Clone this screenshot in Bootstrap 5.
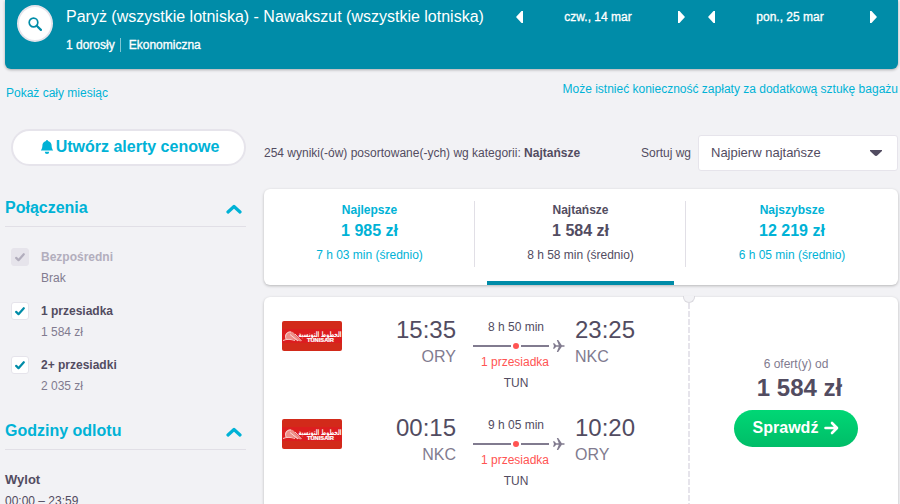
<!DOCTYPE html>
<html lang="pl">
<head>
  <meta charset="UTF-8" />
  <title>Paryż - Nawakszut</title>
  <meta name="viewport" content="width=device-width, initial-scale=1" />
  <!-- Bootstrap CSS -->
  <link href="https://cdn.jsdelivr.net/npm/bootstrap@5.3.0/dist/css/bootstrap.min.css" rel="stylesheet" />
  <style>
    body {
      background: #f2f2f5;
      color: #524c61;
      font-family: "Liberation Sans", Arial, sans-serif;
      font-size: 12px;
      line-height: 18px;
      overflow: hidden;
    }
    svg {
      display: block;
      flex: none;
    }
    a, .teal {
      color: #00b2d6;
      text-decoration: none;
    }
    .page {
      width: 893px;
      margin-left: 5px;
      height: 504px;
    }

    /* Search summary */
    .search-bar {
      height: 69px;
      background: #008ca8;
      color: #fff;
      border-radius: 0 0 6px 6px;
      box-shadow: 0 1px 3px rgba(0,0,0,0.3);
      padding: 5px 0 0 12px;
    }
    .search-btn {
      width: 36px;
      height: 37px;
      border: 2px solid #e6e4eb;
      border-radius: 50%;
      background: #fff;
      margin-right: 13px;
    }
    .search-info {
      width: 450px;
    }
    .route {
      font-size: 16px;
      line-height: 24px;
      font-weight: 400;
    }
    .route-details {
      margin-top: 7px;
      -webkit-text-stroke: 0.3px #fff;
    }
    .route-details .pax {
      border-right: 1px solid #80c6d4;
      padding-right: 5px;
      margin-right: 8px;
      line-height: 14px;
    }
    .day-nav {
      width: 169px;
      height: 24px;
      margin-right: 23px;
      -webkit-text-stroke: 0.3px #fff;
    }
    .day-nav span {
      padding-right: 5px;
    }

    .links-row {
      height: 60px;
      padding-top: 11px;
    }
    .month-link {
      padding: 4px 0 0 1px;
    }

    /* Sidebar */
    .filters {
      width: 241px;
      margin-right: 18px;
    }
    .alert-btn {
      height: 37px;
      margin-left: 6px;
      border: 2px solid #e6e4eb;
      border-radius: 19px;
      background: #fff;
      font-size: 16px;
      font-weight: 700;
      padding: 0 0 2px 2px;
    }
    .alert-btn span {
      margin-left: 2px;
    }
    .filter-title {
      font-size: 16px;
      line-height: 24px;
      font-weight: 700;
      height: 31px;
      border-bottom: 1px solid #e1dfe6;
      margin: 0;
    }
    .filter-title.first {
      margin-top: 30px;
    }
    .filter-title svg {
      margin: 8px 4px 0 0;
    }
    .filter-list {
      padding: 21px 0 0 6px;
      height: 192px;
    }
    .filter-item {
      height: 54px;
    }
    .tick {
      width: 18px;
      height: 18px;
      border: 1px solid #e6e4eb;
      border-radius: 3px;
      background: #fff;
      margin: 0 12px 0 0;
    }
    .tick.off {
      background: #e6e4eb;
    }
    .soft {
      color: #817b8f;
    }
    .off-text {
      color: #b2aebd;
    }
    .filter-item .soft {
      margin-top: 3px;
    }
    .departure-hours {
      padding-top: 21px;
    }
    .hours-label {
      font-size: 13px;
    }
    .hours-range {
      margin-top: 3px;
    }

    /* Results */
    .results {
      width: 634px;
    }
    .sort-row {
      height: 36px;
      margin: 6px 0 18px;
    }
    .sort-select {
      width: 200px;
      height: 36px;
      border: 1px solid #e6e4eb;
      border-radius: 3px;
      background: #fff;
      font-size: 13px;
      padding: 0 15px 0 12px;
      margin-left: 7px;
    }
    .panel {
      background: #fff;
      border-radius: 6px;
      box-shadow: 0 1px 3px rgba(0,0,0,0.25);
    }
    .sort-tabs {
      height: 96px;
    }
    .sort-tab {
      width: 211px;
      padding-top: 12px;
    }
    .sort-tab .inner {
      height: 66px;
      border-right: 1px solid #e1dfe6;
      padding-left: 1px;
    }
    .sort-tab:last-child .inner {
      border-right: 0;
    }
    .sort-tab .price {
      font-size: 16px;
      line-height: 24px;
      font-weight: 700;
    }
    .sort-tab .avg {
      margin-top: 3px;
    }
    .sort-tab .underline {
      height: 4px;
      margin: 14px 12px 0;
      background: #008ca8;
    }
    .ticket {
      height: 230px;
      margin-top: 12px;
      position: relative;
    }
    .legs {
      width: 426px;
      padding: 18px 0 0 18px;
      background: repeating-linear-gradient(#e6e4eb 0 6px, transparent 6px 8px) right 0 top 6px / 2px 100% no-repeat;
    }
    .leg {
      height: 98px;
    }
    .airline {
      margin-top: 6px;
    }
    .clock {
      font-size: 24px;
      line-height: 30px;
    }
    .place {
      font-size: 16px;
      line-height: 24px;
    }
    .depart {
      width: 114px;
    }
    .stops {
      width: 86px;
      margin: 3px 0 0 17px;
    }
    .stops svg {
      width: 94px;
      margin: 4px 0 1px;
    }
    .stop-code {
      margin-top: 3px;
    }
    .coral {
      color: #ff5452;
      margin-right: 2px;
    }
    .arrive {
      margin-left: 16px;
    }
    .notch {
      position: absolute;
      left: 419px;
      top: -1px;
      width: 12px;
      height: 7px;
      background: #f2f2f5;
      border: 1px solid #dad9de;
      border-top: 0;
      border-radius: 0 0 6px 6px;
    }
    .offer {
      width: 208px;
      padding: 58px 0 0 4px;
    }
    .offer .total {
      font-size: 24px;
      line-height: 30px;
      font-weight: 700;
      padding-left: 7px;
    }
    .check-btn {
      width: 124px;
      height: 37px;
      border-radius: 19px;
      background: linear-gradient(#00d775, #00bd68);
      color: #fff;
      font-size: 16px;
      font-weight: 700;
      margin-top: 7px;
      padding-bottom: 2px;
    }
    .check-btn svg {
      margin-left: 6px;
    }
  </style>
</head>
<body>
  <!-- Shared icons -->
  <svg width="0" height="0" class="d-none">
    <symbol id="tri-left" viewBox="0 0 7 12"><path d="M7 0v12H5.500L0 6l5.500-6z" fill="#fff"/></symbol>
    <symbol id="tri-right" viewBox="0 0 7 12"><path d="M0 0v12h1.500L7 6 1.500 0z" fill="#fff"/></symbol>
    <symbol id="chevron" viewBox="0 0 16 10"><path d="M2 8l6-5.500L14 8" fill="none" stroke="#00b2d6" stroke-width="3.200" stroke-linecap="round" stroke-linejoin="round"/></symbol>
    <symbol id="check" viewBox="0 0 10 9"><path d="M1.200 4.900l2.300 2.300L8.800 1.200" fill="none" stroke="currentColor" stroke-width="2.200" stroke-linecap="round" stroke-linejoin="round"/></symbol>
    <symbol id="flight-line" viewBox="0 0 94 12">
      <path d="M0 6h38M48 6h28" stroke="#817b8f" stroke-width="2"/>
      <circle cx="43" cy="6" r="3" fill="#ff5452"/>
      <path d="M80 3.200h1.300L83.200 5.300h2.600L83.800 0h1.400l3.600 5.300H91a.7.7 0 0 1 0 1.400h-2.200L85.200 12h-1.400l2-5.300h-2.600l-1.900 2.100H80L81 6z" fill="#817b8f"/>
    </symbol>
    <symbol id="tunisair" viewBox="0 0 60 30">
      <rect width="60" height="30" rx="2" fill="#d22a1a"/>
      <rect y="8" width="60" height="14" fill="#dc1d1f"/>
      <path d="M4 18c-2-4 0-7 4-7.500 3 0 5 2 5.500 4l6 6c-4 0-7-2.500-10-2.500z" fill="#ee8f8a"/>
      <path d="M4 18c-1.500-4 1-7.500 5-7M1 19.500c4-1.800 8-1.200 12 0M13 13l6.500 7M8 13.500l8 6.500" fill="none" stroke="#fbdedc" stroke-width=".9"/>
      <text x="38" y="15.800" text-anchor="middle" textLength="43" lengthAdjust="spacingAndGlyphs" font-family="DejaVu Sans, sans-serif" font-size="7.500" font-weight="700" fill="#fff">الخطوط التونسية</text>
      <text x="25" y="21.200" textLength="27" lengthAdjust="spacingAndGlyphs" font-family="Liberation Sans, sans-serif" font-size="5" font-weight="700" fill="#fff" stroke="#fff" stroke-width=".2">TUNISAIR</text>
    </symbol>
  </svg>

  <div class="page">
    <header class="search-bar d-flex align-items-start">
      <div class="search-btn d-flex align-items-center justify-content-center">
        <svg width="14" height="14" viewBox="0 0 14 14"><circle cx="5.500" cy="5.500" r="4.300" fill="none" stroke="#008ca8" stroke-width="1.700"/><path d="M8.700 8.700l4.200 4.200" stroke="#008ca8" stroke-width="2.200" stroke-linecap="round"/></svg>
      </div>
      <div class="search-info">
        <h1 class="route mb-0 text-nowrap">Paryż (wszystkie lotniska) - Nawakszut (wszystkie lotniska)</h1>
        <div class="route-details d-flex align-items-center"><span class="pax">1 dorosły</span><span>Ekonomiczna</span></div>
      </div>
      <div class="day-nav d-flex align-items-center justify-content-between">
        <svg width="7" height="12"><use href="#tri-left"/></svg>
        <span>czw., 14 mar</span>
        <svg width="7" height="12"><use href="#tri-right"/></svg>
      </div>
      <div class="day-nav d-flex align-items-center justify-content-between me-0">
        <svg width="7" height="12"><use href="#tri-left"/></svg>
        <span>pon., 25 mar</span>
        <svg width="7" height="12"><use href="#tri-right"/></svg>
      </div>
    </header>

    <div class="links-row d-flex justify-content-between">
      <a href="#" class="month-link">Pokaż cały miesiąc</a>
      <a href="#">Może istnieć konieczność zapłaty za dodatkową sztukę bagażu</a>
    </div>

    <div class="d-flex">
      <aside class="filters">
        <div class="alert-btn teal d-flex align-items-center justify-content-center">
          <svg width="14" height="14" viewBox="0 0 14 14"><path d="M6 1a1 1 0 0 1 2 0c2.400.6 3.600 2.400 3.600 4.600 0 2.400.6 3.600 1.600 4.800H.8C1.800 9.200 2.400 8 2.400 5.600 2.400 3.400 3.600 1.600 6 1zM4.800 11.700h4.400a2.200 2.200 0 0 1-4.400 0z" fill="#00b2d6"/></svg>
          <span>Utwórz alerty cenowe</span>
        </div>

        <h2 class="filter-title first teal d-flex justify-content-between">Połączenia<svg width="16" height="10"><use href="#chevron"/></svg></h2>
        <div class="filter-list">
          <div class="filter-item d-flex">
            <div class="tick off off-text d-flex align-items-center justify-content-center"><svg width="10" height="9"><use href="#check"/></svg></div>
            <div><div class="fw-bold off-text">Bezpośredni</div><div class="soft">Brak</div></div>
          </div>
          <div class="filter-item d-flex">
            <div class="tick d-flex align-items-center justify-content-center"><svg width="10" height="9" color="#008ca8"><use href="#check"/></svg></div>
            <div><div class="fw-bold">1 przesiadka</div><div class="soft">1 584 zł</div></div>
          </div>
          <div class="filter-item d-flex">
            <div class="tick d-flex align-items-center justify-content-center"><svg width="10" height="9" color="#008ca8"><use href="#check"/></svg></div>
            <div><div class="fw-bold">2+ przesiadki</div><div class="soft">2 035 zł</div></div>
          </div>
        </div>

        <h2 class="filter-title teal d-flex justify-content-between">Godziny odlotu<svg width="16" height="10"><use href="#chevron"/></svg></h2>
        <div class="departure-hours">
          <div class="hours-label fw-bold">Wylot</div>
          <div class="hours-range">00:00 – 23:59</div>
        </div>
      </aside>

      <main class="results">
        <div class="sort-row d-flex align-items-center">
          <div class="me-auto">254 wyniki(-ów) posortowane(-ych) wg kategorii: <b>Najtańsze</b></div>
          <div>Sortuj wg</div>
          <div class="sort-select d-flex align-items-center justify-content-between">
            Najpierw najtańsze
            <svg width="12" height="6" viewBox="0 0 12 6"><path d="M0 0h12v1L7.200 5.500a1.800 1.800 0 0 1-2.400 0L0 1z" fill="#524c61"/></svg>
          </div>
        </div>

        <div class="panel sort-tabs d-flex text-center">
          <div class="sort-tab teal">
            <div class="inner"><div class="fw-bold">Najlepsze</div><div class="price">1 985 zł</div><div class="avg">7 h 03 min (średnio)</div></div>
          </div>
          <div class="sort-tab">
            <div class="inner"><div class="fw-bold">Najtańsze</div><div class="price">1 584 zł</div><div class="avg">8 h 58 min (średnio)</div></div>
            <div class="underline"></div>
          </div>
          <div class="sort-tab teal">
            <div class="inner"><div class="fw-bold">Najszybsze</div><div class="price">12 219 zł</div><div class="avg">6 h 05 min (średnio)</div></div>
          </div>
        </div>

        <div class="panel ticket d-flex">
          <div class="legs">
            <div class="leg d-flex align-items-start">
              <svg class="airline" width="60" height="30"><use href="#tunisair"/></svg>
              <div class="depart text-end"><div class="clock">15:35</div><div class="place soft">ORY</div></div>
              <div class="stops text-center"><div>8 h 50 min</div><svg height="12"><use href="#flight-line"/></svg><div class="coral">1 przesiadka</div><div class="stop-code">TUN</div></div>
              <div class="arrive"><div class="clock">23:25</div><div class="place soft">NKC</div></div>
            </div>
            <div class="leg d-flex align-items-start">
              <svg class="airline" width="60" height="30"><use href="#tunisair"/></svg>
              <div class="depart text-end"><div class="clock">00:15</div><div class="place soft">NKC</div></div>
              <div class="stops text-center"><div>9 h 05 min</div><svg height="12"><use href="#flight-line"/></svg><div class="coral">1 przesiadka</div><div class="stop-code">TUN</div></div>
              <div class="arrive"><div class="clock">10:20</div><div class="place soft">ORY</div></div>
            </div>
          </div>
          <span class="notch"></span>
          <div class="offer d-flex flex-column align-items-center">
            <div class="soft">6 ofert(y) od</div>
            <div class="total">1 584 zł</div>
            <div class="check-btn d-flex align-items-center justify-content-center">
              Sprawdź
              <svg width="15" height="14" viewBox="0 0 15 14"><path d="M1.500 7h11M8 2l5 5-5 5" fill="none" stroke="#fff" stroke-width="2.600" stroke-linecap="round" stroke-linejoin="round"/></svg>
            </div>
          </div>
        </div>
      </main>
    </div>
  </div>

  <script src="https://cdn.jsdelivr.net/npm/bootstrap@5.3.0/dist/js/bootstrap.bundle.min.js"></script>
</body>
</html>
